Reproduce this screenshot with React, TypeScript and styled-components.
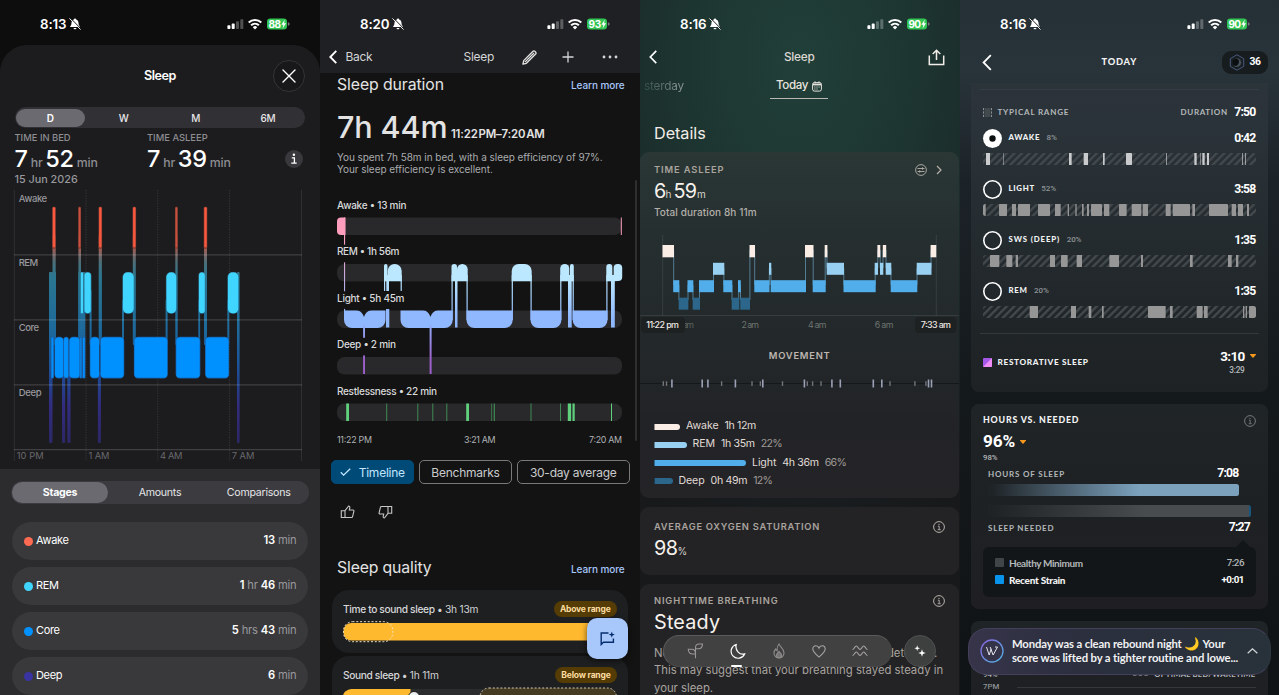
import { createGlobalStyle, css, styled } from "styled-components";

const GlobalStyle = createGlobalStyle`
  * {
    box-sizing: border-box;
  }
  body {
    margin: 0;
    background: #000;
    overflow: hidden;
    font-family: "Inter", "Liberation Sans", sans-serif;
    color: white;
  }
  svg {
    display: block;
    flex: none;
  }
`;

const Board = styled.div`
  display: grid;
  grid-template-columns: 320px 320px 320px 319px;
  width: 1279px;
  height: 695px;
`;

const Panel = styled.section<{ $bg: string }>`
  position: relative;
  display: flex;
  flex-direction: column;
  height: 695px;
  overflow: hidden;
  background: ${(p) => p.$bg};
`;

type TextProps = { $s: number; $w?: number; $c?: string; $ls?: number; $lh?: number };

const textStyle = css<TextProps>`
  font-size: ${(p) => p.$s}px;
  font-weight: ${(p) => p.$w ?? 400};
  color: ${(p) => p.$c ?? "#fff"};
  letter-spacing: ${(p) => p.$ls ?? 0}px;
  line-height: ${(p) => (p.$lh ? p.$lh + "px" : "1.2")};
  white-space: nowrap;
`;

const Text = styled.span<TextProps>`
  ${textStyle}
`;

/* ---------- status bar ---------- */

const StatusRow = styled.div`
  display: flex;
  align-items: center;
  flex: none;
  width: 320px;
  height: 45px;
  padding: 3px 30px 0 40px;
`;

const Clock = styled.span`
  font-size: 13.3px;
  font-weight: 600;
  letter-spacing: -0.1px;
  margin-right: 3px;
`;

const StatusIcons = styled.div`
  display: flex;
  align-items: center;
  gap: 4.6px;
  margin-left: auto;
`;

function StatusBar(prop: { time: string; level: string }) {
  return (
    <StatusRow>
      <Clock>{prop.time}</Clock>
      <svg width="12" height="12" viewBox="0 0 12 12">
        <path
          d="M6 .6c.7 0 1 .4 1.1.9 1.6.5 2.3 1.8 2.4 3.3.1 1.9.5 2.7 1.1 3.3.4.4.3 1-.4 1H1.8c-.7 0-.8-.6-.4-1 .6-.6 1-1.4 1.1-3.300.1-1.5.8-2.800 2.400-3.300C5 1 5.300.6 6 .6zM4.500 9.900h3c-.2.9-.8 1.300-1.500 1.300s-1.300-.4-1.500-1.300z"
          fill="#fff"
        />
        <path d="M1.6.2 12 10.8" stroke="#222" />
        <path d="M.7.7 11.3 11.3" stroke="#fff" strokeWidth=".9" strokeLinecap="round" />
      </svg>
      <StatusIcons>
        <svg width="17" height="12" viewBox="0 0 17 12">
          <rect x=".4" y="7.3" width="3" height="3.7" rx=".8" fill="#fff" />
          <rect x="4.7" y="5.6" width="3" height="5.4" rx=".8" fill="#fff" />
          <rect x="9" y="3.3" width="3" height="7.7" rx=".8" fill="#fff" opacity=".28" />
          <rect x="13.3" y="1.2" width="3" height="9.8" rx=".8" fill="#fff" opacity=".28" />
        </svg>
        <svg width="14" height="12" viewBox="0 0 14 12">
          <path d="M.7 4.5a9 9 0 0 1 12.6 0" stroke="#fff" strokeWidth="2" fill="none" />
          <path d="M3.1 7.2a5.7 5.7 0 0 1 7.8 0" stroke="#fff" strokeWidth="2" fill="none" />
          <path d="M7 11.4 4.8 9.2a3.1 3.1 0 0 1 4.4 0z" fill="#fff" />
        </svg>
        <svg width="23" height="12" viewBox="0 0 23 12">
          <rect y=".5" width="20" height="11" rx="3.3" fill="#32c553" />
          <path d="M20.8 4.2c1.3.3 1.9 1 1.9 1.8s-.6 1.5-1.9 1.8z" fill="#777" />
          <text x="1.6" y="9.6" fontSize="10" fontWeight="700" fill="#fff" textLength="12.5">
            {prop.level}
          </text>
          <path d="M17.7 1.8 14.3 6.700h2l-.7 3.700 3.500-5.100h-2z" fill="#fff" />
        </svg>
      </StatusIcons>
    </StatusRow>
  );
}

const BackIcon = styled.svg<{ $ml?: number }>`
  margin-left: ${(p) => p.$ml ?? 0}px;
`;

function Back(prop: { size: number; stroke: number; ml?: number }) {
  return (
    <BackIcon $ml={prop.ml} width={prop.size * 0.6} height={prop.size} viewBox="0 0 9 15">
      <path d="M7.8 1 1.4 7.5l6.4 6.5" stroke="#fff" strokeWidth={prop.stroke} fill="none" />
    </BackIcon>
  );
}

function Label(prop: { x: number; y: number; w: number; s?: number; c?: string; b?: number; children: string }) {
  return (
    <text x={prop.x} y={prop.y} textLength={prop.w} fontSize={prop.s ?? 9.5} fontWeight={prop.b ?? 400} fill={prop.c ?? "#98989d"}>
      {prop.children}
    </text>
  );
}

/* ---------- 1: stages sheet ---------- */

const Sheet = styled.div`
  display: flex;
  flex-direction: column;
  flex: none;
  height: 424px;
  border-radius: 27px 27px 0 0;
  background: #1c1c1e;
`;

const SheetHead = styled.header`
  display: grid;
  grid-template-columns: 1fr auto 1fr;
  align-items: center;
  height: 62px;
  padding: 0 15px;
`;

const CloseButton = styled.button`
  justify-self: end;
  display: grid;
  place-items: center;
  width: 32px;
  height: 32px;
  padding: 0;
  border: 1px solid #343437;
  border-radius: 50%;
  background: #18181a;
`;

const Segments = styled.div<{ $h: number; $bg: string; $m: string; $cols: number }>`
  display: grid;
  grid-template-columns: repeat(${(p) => p.$cols}, 1fr);
  flex: none;
  height: ${(p) => p.$h}px;
  margin: ${(p) => p.$m};
  padding: 1.5px 1px;
  border-radius: 12px;
  background: ${(p) => p.$bg};
`;

const Segment = styled.button<{ $on?: boolean; $s: number; $b?: number }>`
  border: none;
  padding: 0;
  margin-right: ${(p) => (p.$on ? 2.5 : 0)}px;
  border-radius: 11px;
  background: ${(p) => (p.$on ? "#6b6a70" : "transparent")};
  color: ${(p) => (p.$on ? "#fff" : "#e6e6e8")};
  font-family: inherit;
  font-size: ${(p) => p.$s}px;
  font-weight: ${(p) => p.$b ?? 400};
  letter-spacing: -0.25px;
`;

const Metrics = styled.div`
  display: grid;
  grid-template-columns: 132.5px 1fr auto;
  height: 44px;
  padding: 0 17px 0 14.5px;
`;

const Metric = styled.div`
  padding-top: 3px;
`;

const MetricValue = styled.div`
  display: flex;
  align-items: baseline;
  gap: 2.8px;
  height: 24px;
  margin-top: 1.5px;
`;

const InfoDot = styled.div`
  display: grid;
  place-items: center;
  width: 18px;
  height: 18px;
  margin-top: 22px;
  border-radius: 50%;
  background: #39393d;
`;

const SheetDate = styled.div`
  ${textStyle}
  padding-left: 14.5px;
`;

const StageList = styled.div`
  display: flex;
  flex-direction: column;
  gap: 7.5px;
  padding: 18px 12px 0 11.5px;
`;

const StageRow = styled.div`
  display: flex;
  align-items: center;
  flex: none;
  height: 37.5px;
  padding: 0.5px 11.5px 0 12px;
  border-radius: 19px;
  background: #39393b;
`;

const Dot = styled.i<{ $c: string }>`
  width: 9px;
  height: 9px;
  margin-right: 3.5px;
  border-radius: 50%;
  background: ${(p) => p.$c};
`;

const StageValue = styled.div`
  display: flex;
  gap: 3px;
  margin-left: auto;
`;

// [center, width]
const awake = [[54, 3], [79.6, 2.3], [100.3, 3], [134.3, 3], [176.4, 2.3], [205.5, 3]];
// [x, width]
const remBlocks = [[80.8, 2.3], [84.5, 6.3], [123, 10.7], [166.5, 9.7], [199, 5.8], [228, 10.3]];
const coreBlocks = [[51.5, 1.8], [55, 8.3], [64, 4.2], [69.6, 9.9], [80.4, 1], [83, 1.7], [90.4, 8.6], [100.8, 22.8], [134.5, 32.7], [176.3, 23.4], [205.7, 22.8]];
// [x, width, top, bottom]
const links = [
  [49, 3.5, 272, 443],
  [52, 4, 272, 345],
  [52.5, 3.2, 235, 280],
  [78.3, 7, 272, 378],
  [78.4, 2.6, 235, 345],
  [89.6, 2, 290, 345],
  [98.7, 3.2, 235, 345],
  [122, 2, 300, 345],
  [132.8, 3, 235, 345],
  [165.6, 2, 300, 345],
  [175.3, 2.4, 235, 345],
  [198.3, 1.8, 300, 345],
  [204, 3, 235, 345],
  [227.3, 1.9, 300, 345],
  [237, 2.6, 272, 443],
  [62, 3.2, 372, 443],
  [67.3, 3.2, 372, 443],
  [97.9, 3, 372, 443],
];

function StagesChart() {
  return (
    <svg width="320" height="281" viewBox="0 188 320 281">
      <defs>
        <linearGradient id="link" gradientUnits="userSpaceOnUse" x1="0" x2="0" y1="235" y2="443">
          <stop offset="0" stopColor="#d8543d" />
          <stop offset=".06" stopColor="#a85a50" />
          <stop offset=".13" stopColor="#4c6f78" />
          <stop offset=".2" stopColor="#2b7690" />
          <stop offset=".45" stopColor="#1d6a9c" />
          <stop offset=".6" stopColor="#1a579c" />
          <stop offset=".72" stopColor="#23418c" />
          <stop offset=".82" stopColor="#322c80" />
          <stop offset="1" stopColor="#2c2765" />
        </linearGradient>
      </defs>
      {[14.3, 301.5].map((x) => (
        <path key={x} d={`M${x} 190V461`} stroke="#303033" />
      ))}
      {[86, 157.8, 229.4].map((x) => (
        <path key={x} d={`M${x} 190V461`} stroke="#37373a" strokeDasharray="1.3 1.3" />
      ))}
      {links.map(([x, w, y1, y2], i) => (
        <rect key={i} x={x} y={y1} width={w} height={y2 - y1} rx=".8" fill="url(#link)" />
      ))}
      {awake.map(([x, w]) => (
        <g key={x}>
          <rect x={x - w / 2 - 0.3} y="206.8" width={w + 0.6} height="42" rx="1.2" fill="#7d3a30" />
          <rect x={x - w / 2 + 0.3} y="207.3" width={w - 0.6} height="40.3" rx="1" fill={w > 2.5 ? "#f9583f" : "#c8503c"} />
        </g>
      ))}
      {remBlocks.map(([x, w]) => (
        <rect key={x} x={x} y="272.5" width={w} height="40.7" rx={w > 5 ? Math.min(w / 2, 4.5) : 0.5} fill="#40d5ff" stroke="url(#link)" strokeWidth="1.2" paintOrder="stroke" />
      ))}
      {coreBlocks.map(([x, w]) => (
        <rect key={x} x={x} y="337.5" width={w} height="40.3" rx={w > 4 ? Math.min(w / 2, 3.5) : 0.4} fill="#0091ff" stroke="#1a5ea6" strokeWidth="1.3" paintOrder="stroke" />
      ))}
      {[254.8, 319.9, 384.8, 449.7].map((y) => (
        <path key={y} d={`M14 ${y}H302`} stroke="#fff" strokeOpacity=".16" strokeWidth="1.2" />
      ))}
      <Label x={18.7} y={201.5} w={28.5} b={500}>Awake</Label>
      <Label x={18.7} y={266.4} w={19.5} b={500}>REM</Label>
      <Label x={18.7} y={331.4} w={20.5} b={500}>Core</Label>
      <Label x={18.7} y={396.4} w={23} b={500}>Deep</Label>
      <Label x={16.7} y={459} w={27} s={9.3} c="#69696d">10 PM</Label>
      <Label x={88.5} y={459} w={21} s={9.3} c="#69696d">1 AM</Label>
      <Label x={160} y={459} w={22.5} s={9.3} c="#69696d">4 AM</Label>
      <Label x={231.8} y={459} w={22.5} s={9.3} c="#69696d">7 AM</Label>
    </svg>
  );
}

function BedMetric(prop: { label: string; hours: string; minutes: string }) {
  return (
    <Metric>
      <Text as="div" $s={9.4} $w={500} $c="#8d8d92" $lh={14}>
        {prop.label}
      </Text>
      <MetricValue>
        <Text $s={23.5} $w={500} $lh={24}>{prop.hours}</Text>
        <Text $s={12.3} $w={500} $c="#8d8d92" $ls={-0.2}>hr</Text>
        <Text $s={23.5} $w={500} $lh={24} $ls={-0.2}>{prop.minutes}</Text>
        <Text $s={12.3} $w={500} $c="#8d8d92" $ls={-0.1}>min</Text>
      </MetricValue>
    </Metric>
  );
}

const stageRows = [
  { name: "Awake", color: "#ff6a52", value: ["13", "min"] },
  { name: "REM", color: "#40d5ff", value: ["1", "hr", "46", "min"] },
  { name: "Core", color: "#0091ff", value: ["5", "hrs", "43", "min"] },
  { name: "Deep", color: "#3934a2", value: ["6", "min"] },
];

function StagesPanel() {
  return (
    <Panel $bg="linear-gradient(#0d0d0d 0 100px, #2c2c2e 300px)">
      <StatusBar time="8:13" level="88" />
      <Sheet>
        <SheetHead>
          <i />
          <Text $s={12.6} $w={600} $ls={-0.45}>Sleep</Text>
          <CloseButton>
            <svg width="14" height="14" viewBox="0 0 14 14">
              <path d="M1 1l12 12M13 1 1 13" stroke="#fff" strokeWidth="1.4" strokeLinecap="round" />
            </svg>
          </CloseButton>
        </SheetHead>
        <Segments $h={21} $bg="#313034" $m="0 15px 0 14.5px" $cols={4}>
          <Segment $on $s={10} $b={600}>D</Segment>
          <Segment $s={10} $b={500}>W</Segment>
          <Segment $s={10} $b={500}>M</Segment>
          <Segment $s={10} $b={500}>6M</Segment>
        </Segments>
        <Metrics>
          <BedMetric label="TIME IN BED" hours="7" minutes="52" />
          <BedMetric label="TIME ASLEEP" hours="7" minutes="39" />
          <InfoDot>
            <svg width="6" height="12" viewBox="0 0 6 12">
              <circle cx="2.9" cy="1.7" r="1.2" fill="#fff" />
              <path d="M.8 4.9h2.6v5M.3 10.2h5.4" stroke="#fff" strokeWidth="1.3" fill="none" />
            </svg>
          </InfoDot>
        </Metrics>
        <SheetDate $s={10.8} $w={500} $c="#98989d" $lh={16}>15 Jun 2026</SheetDate>
        <StagesChart />
      </Sheet>
      <Segments $h={23.5} $bg="#3c3b40" $m="11.5px 11px 0 11px" $cols={3}>
        <Segment $on $s={10.6} $b={700}>Stages</Segment>
        <Segment $s={10.6}>Amounts</Segment>
        <Segment $s={10.6}>Comparisons</Segment>
      </Segments>
      <StageList>
        {stageRows.map((row) => (
          <StageRow key={row.name}>
            <Dot $c={row.color} />
            <Text $s={11} $ls={-0.35}>{row.name}</Text>
            <StageValue>
              {row.value.map((v, i) => (
                <Text key={i} $s={11.2} $w={i % 2 ? 400 : 600} $c={i % 2 ? "#98989d" : "#fff"} $ls={-0.2}>
                  {v}
                </Text>
              ))}
            </StageValue>
          </StageRow>
        ))}
      </StageList>
    </Panel>
  );
}

/* ---------- 2: duration timeline ---------- */

const FitTop = styled.div`
  flex: none;
  height: 73px;
  background: #1f2023;
`;

const FitNav = styled.nav`
  display: grid;
  grid-template-columns: 16.5px 118px auto 1fr;
  align-items: center;
  height: 24px;
  padding: 0 22px 0 9px;
`;

const FitActions = styled.div`
  display: flex;
  align-items: center;
  justify-content: flex-end;
  gap: 28px;

  & > :first-child {
    margin-right: -3px;
  }
`;

const TitleRow = styled.div<{ $mt?: number }>`
  display: flex;
  align-items: center;
  justify-content: space-between;
  flex: none;
  height: 24px;
  margin-top: ${(p) => p.$mt ?? 0}px;
  padding: 0 15.5px 0 17px;
`;

const Hero = styled.div`
  display: flex;
  align-items: baseline;
  gap: 3.5px;
  flex: none;
  height: 36px;
  margin-top: 12px;
  padding-left: 17px;
`;

const FitNote = styled.p`
  ${textStyle}
  margin: 5.5px 0 19.7px;
  padding-left: 17px;
  white-space: pre-line;
`;

const Chips = styled.div`
  display: flex;
  gap: 5px;
  flex: none;
  margin: 15px 0 0 11px;
`;

const Chip = styled.button<{ $on?: boolean; $w: number }>`
  display: flex;
  align-items: center;
  justify-content: center;
  gap: 7.5px;
  width: ${(p) => p.$w}px;
  height: 24px;
  padding: 0;
  border: 1px solid ${(p) => (p.$on ? "#004a77" : "#77797b")};
  border-radius: 5px;
  background: ${(p) => (p.$on ? "#004a77" : "transparent")};
  color: ${(p) => (p.$on ? "#c2e7ff" : "#c9cbcd")};
  font-family: inherit;
  font-size: 12px;
  letter-spacing: -0.25px;
  white-space: nowrap;
`;

const Thumbs = styled.div`
  display: flex;
  gap: 23px;
  flex: none;
  height: 14px;
  margin: 21px 0 0 19.5px;
`;

const QualityCard = styled.div<{ $mt: number }>`
  flex: none;
  height: 63.5px;
  margin: ${(p) => p.$mt}px 12.5px 0 11.5px;
  border-radius: 17px;
  background: #1e1f21;
`;

const QualityHead = styled.div`
  display: flex;
  align-items: center;
  justify-content: space-between;
  height: 31px;
  padding: 7.5px 11px 0 11.5px;
`;

const Badge = styled.span`
  padding: 0 6px;
  border-radius: 8px;
  background: #553c04;
  color: #fbdca0;
  font-size: 8.5px;
  font-weight: 700;
  line-height: 16px;
  letter-spacing: -0.2px;
`;

const Fab = styled.button`
  position: absolute;
  left: 267px;
  top: 618px;
  display: grid;
  place-items: center;
  width: 41px;
  height: 41px;
  padding: 0;
  border: none;
  border-radius: 10px;
  background: #a8c7fa;
  box-shadow: 0 2px 6px rgba(0, 0, 0, 0.6);
`;

const Scrollbar = styled.div`
  position: absolute;
  right: 3px;
  top: 180px;
  width: 2px;
  height: 261px;
  border-radius: 1px;
  background: #2f2f30;
`;

// [x, width, strong]
const restless = [[346.2, 2.8, 1], [386.2, 1, 0], [417.3, 1, 0], [432.3, 1, 0], [446.3, 1, 0], [466.2, 2.8, 1], [491.3, 0.8, 0], [493.7, 1.2, 0], [530.5, 1, 0], [560, 1, 0], [567.8, 3.3, 1], [572.5, 2.2, 1], [611, 1, 1]];
const domes = [[384, 387.5], [387.7, 401.7], [451.5, 457], [457, 467.7], [511.7, 531.7], [560.2, 569.3], [570, 573.8], [606.3, 612.3]];
const blueLinks = [[384, 1.2, 291], [386.3, 2.7, 291], [400.6, 1.2, 291], [451.5, 1.2, 320], [455, 2.5, 327.5], [466.5, 1.2, 320], [511.7, 1.2, 320], [530.5, 1.2, 320], [560.2, 1.2, 320], [568, 3.7, 327.5], [572.6, 1.2, 320], [606.3, 1.2, 320], [611, 3.8, 327.5]];

function cup(x1: number, x2: number) {
  return `M${x1} 310.5V320a8 8 0 0 0 8 8H${x2 - 8}a8 8 0 0 0 8-8V310.5z`;
}

function TimelineChart() {
  return (
    <svg width="320" height="250" viewBox="320 195 320 250">
      <defs>
        <linearGradient id="rl" gradientUnits="userSpaceOnUse" x1="0" x2="0" y1="278" y2="318">
          <stop offset="0" stopColor="#bbe8ff" />
          <stop offset="1" stopColor="#90b8ff" />
        </linearGradient>
        <linearGradient id="pd" gradientUnits="userSpaceOnUse" x1="0" x2="0" y1="217" y2="315">
          <stop offset=".2" stopColor="#ff9dbc" />
          <stop offset="1" stopColor="#90b8ff" />
        </linearGradient>
        <linearGradient id="ld" gradientUnits="userSpaceOnUse" x1="0" x2="0" y1="320" y2="360">
          <stop offset="0" stopColor="#90b8ff" />
          <stop offset="1" stopColor="#9c5fcb" />
        </linearGradient>
      </defs>
      {[217.5, 264, 310.5, 357, 403.5].map((y) => (
        <rect key={y} x="337" y={y} width="285" height="17.5" rx="7.5" fill="#29292b" />
      ))}
      <path d="M341 217.5h4.5V235H341a4 4 0 0 1-4-4v-9.5a4 4 0 0 1 4-4z" fill="#ff9dbc" />
      <path d="M344 217.5h1.1V318H344z" fill="url(#pd)" />
      <rect x="620.8" y="217.5" width="1" height="17.5" fill="#ff9dbc" />
      {blueLinks.map(([x, w, y2]) => (
        <rect key={x} x={x} y="275" width={w} height={y2 - 275} fill="url(#rl)" />
      ))}
      {domes.map(([x1, x2]) => {
        const r = Math.min((x2 - x1) / 2, 7);
        return <path key={x1} d={`M${x1} 281.3V${264 + r}a${r} ${r} 0 0 1 ${r}-${r}H${x2 - r}a${r} ${r} 0 0 1 ${r} ${r}V281.3z`} fill="#bbe8ff" />;
      })}
      <path d="M613.7 281.3V268a4 4 0 0 1 4-4h.5a4 4 0 0 1 4 4v9a4 4 0 0 1-4 4z" fill="#bbe8ff" />
      {[[344, 385.5], [400.5, 452.7], [466.5, 512.7], [530.5, 561.4], [572.7, 607.5]].map(([a, b]) => (
        <path key={a} d={cup(a, b)} fill="#90b8ff" />
      ))}
      <path d="M356 310c4.5.6 6.5 3 8 7 1.5-4 3.5-6.4 8-7zM422.5 310c4.5.6 6.5 3 8 7 1.5-4 3.5-6.4 8-7z" fill="#1a1a1b" />
      <rect x="386" y="309" width="3.3" height="18.5" fill="#90b8ff" />
      <rect x="363.1" y="325" width="1.9" height="49" fill="url(#ld)" />
      <rect x="429.6" y="325" width="2" height="49" fill="url(#ld)" />
      {/* captions sit on top of the connectors */}
      {[[244.7, 74], [291.3, 72], [337.8, 60]].map(([y, w]) => (
        <rect key={y} x="337" y={y} width={w} height="17.6" fill="#131313" />
      ))}
      {restless.map(([x, w, on]) => (
        <rect key={x} x={x} y="403.5" width={w} height="17.5" fill={on ? "#5fd17c" : "#3f8a55"} />
      ))}
      <Label x={337} y={208.5} w={69.5} s={10} c="#d9dadc" b={500}>Awake • 13 min</Label>
      <Label x={337} y={255} w={62.5} s={10} c="#d9dadc" b={500}>REM • 1h 56m</Label>
      <Label x={337} y={301.7} w={67.5} s={10} c="#d9dadc" b={500}>Light • 5h 45m</Label>
      <Label x={337} y={348.3} w={59} s={10} c="#d9dadc" b={500}>Deep • 2 min</Label>
      <Label x={337} y={394.9} w={100} s={10} c="#d9dadc" b={500}>Restlessness • 22 min</Label>
      <Label x={337} y={442.7} w={35} s={8.9} c="#b0b2b5">11:22 PM</Label>
      <Label x={464} y={442.7} w={31.5} s={8.9} c="#b0b2b5">3:21 AM</Label>
      <Label x={589} y={442.7} w={33} s={8.9} c="#b0b2b5">7:20 AM</Label>
    </svg>
  );
}

function QualityTitle(prop: { name: string; value: string; badge: string }) {
  return (
    <QualityHead>
      <Text $s={10.2} $w={500} $c="#d6d8da" $ls={-0.36}>
        {prop.name} <Text $s={10.2} $c="#d0d2d4" $ls={-0.25}>• {prop.value}</Text>
      </Text>
      <Badge>{prop.badge}</Badge>
    </QualityHead>
  );
}

const thumb = "M5 5.7 8.6 1c.9.1 1.4.8 1.2 1.7L9.3 5H13c.7 0 1 .5.9 1.1l-1.3 5.5c-.1.6-.5.9-1.1.9H5zM5 5.7H1.3v6.8H5";

function DurationPanel() {
  return (
    <Panel $bg="#131313">
      <FitTop>
        <StatusBar time="8:20" level="93" />
        <FitNav>
          <Back size={14} stroke={2} />
          <Text $s={12} $c="#d4d5d7" $ls={-0.35}>Back</Text>
          <Text $s={12} $c="#d4d5d7" $ls={-0.3}>Sleep</Text>
          <FitActions>
            <svg width="15" height="15" viewBox="0 0 15 15" fill="none" stroke="#e3e3e3" strokeWidth="1.3" strokeLinejoin="round">
              <path d="M.9 14.1l.8-3.5L11 1.3c.6-.6 1.3-.6 1.8 0l.9.9c.5.6.5 1.2 0 1.8L4.4 13.3zM2.9 12.1 12 3" />
            </svg>
            <svg width="12" height="12" viewBox="0 0 12 12">
              <path d="M6 .5v11M.5 6h11" stroke="#d4d5d7" strokeWidth="1.3" />
            </svg>
            <svg width="16" height="4" viewBox="0 0 16 4" fill="#d4d5d7">
              <circle cx="2" cy="2" r="1.4" />
              <circle cx="8" cy="2" r="1.4" />
              <circle cx="14" cy="2" r="1.4" />
            </svg>
          </FitActions>
        </FitNav>
      </FitTop>
      <TitleRow>
        <Text $s={15.8} $c="#e3e3e3" $ls={-0.08}>Sleep duration</Text>
        <Text $s={10} $w={500} $c="#a8c7fa" $ls={-0.1}>Learn more</Text>
      </TitleRow>
      <Hero>
        <Text $s={30.5} $w={500} $c="#e3e3e3" $ls={-0.1} $lh={36}>7h 44m</Text>
        <Text $s={11.4} $w={600} $c="#e3e3e3" $ls={-0.15}>11:22&#8202;PM–7:20&#8202;AM</Text>
      </Hero>
      <FitNote $s={10} $c="#a9abae" $ls={-0.05} $lh={12.4}>
        {"You spent 7h 58m in bed, with a sleep efficiency of 97%.\nYour sleep efficiency is excellent."}
      </FitNote>
      <TimelineChart />
      <Chips>
        <Chip $on $w={83}>
          <svg width="11" height="8" viewBox="0 0 11 8">
            <path d="M.8 4.2l2.8 2.9L10.2.7" stroke="#c2e7ff" strokeWidth="1.3" fill="none" />
          </svg>
          Timeline
        </Chip>
        <Chip $w={93}>Benchmarks</Chip>
        <Chip $w={112.5}>30-day average</Chip>
      </Chips>
      <Thumbs>
        <svg width="15" height="14" viewBox="0 0 15 14" fill="none" stroke="#c4c7c5" strokeWidth="1.1">
          <path d={thumb} />
        </svg>
        <svg width="15" height="14" viewBox="0 0 15 14" fill="none" stroke="#c4c7c5" strokeWidth="1.1">
          <path d={thumb} transform="rotate(180 7.5 7)" />
        </svg>
      </Thumbs>
      <TitleRow $mt={37.5}>
        <Text $s={15.8} $c="#e3e3e3" $ls={-0.15}>Sleep quality</Text>
        <Text $s={10} $w={500} $c="#a8c7fa" $ls={-0.1}>Learn more</Text>
      </TitleRow>
      <QualityCard $mt={9}>
        <QualityTitle name="Time to sound sleep" value="3h 13m" badge="Above range" />
        <svg width="296" height="23" viewBox="331.5 621 296 23">
          <rect x="343" y="623" width="273" height="17.5" rx="8" fill="#ffb92e" />
          <rect x="343" y="621.7" width="49.3" height="20" rx="9" fill="none" stroke="#f0e3c4" strokeDasharray="2 1.8" />
        </svg>
      </QualityCard>
      <QualityCard $mt={2.5}>
        <QualityTitle name="Sound sleep" value="1h 11m" badge="Below range" />
        <svg width="296" height="23" viewBox="331.5 687 296 23">
          <rect x="343" y="689" width="273" height="17.5" rx="8" fill="#2b2c2e" />
          <path d="M410 689v17.5H351a8 8 0 0 1 0-17.5z" fill="#ffb92e" />
          <rect x="479.5" y="688" width="136.5" height="20" rx="9" fill="#453b22" stroke="#cfc6ae" strokeDasharray="2 1.8" />
          <circle cx="413.5" cy="697" r="5.5" fill="#f1f1f1" stroke="#1e1f21" />
        </svg>
      </QualityCard>
      <Scrollbar />
      <Fab>
        <svg width="15" height="15" viewBox="0 0 15 15">
          <path d="M8.5 2H1.2v11.5l2.2-2.2h10V7.5" stroke="#062e6f" strokeWidth="1.4" fill="none" />
          <path d="M11.8.4l.8 2.4 2.3.8-2.3.8-.8 2.4-.8-2.4-2.3-.8 2.3-.8z" fill="#062e6f" />
        </svg>
      </Fab>
    </Panel>
  );
}

/* ---------- 3: details ---------- */

const RingNav = styled.nav`
  display: grid;
  grid-template-columns: 1fr auto 1fr;
  align-items: center;
  flex: none;
  height: 24px;
  padding: 0 15.5px 0 14px;
`;

const ShareSlot = styled.div`
  justify-self: end;
`;

const Tabs = styled.div`
  display: grid;
  grid-template-columns: 130px 58px;
  flex: none;
  height: 30px;
`;

const OtherDay = styled.span`
  padding: 8px 0 0 4px;
  font-size: 11.8px;
  line-height: 18px;
  letter-spacing: -0.2px;
  color: transparent;
  background: linear-gradient(90deg, #2b4a45 2px, #8a9593 42px);
  background-clip: text;
`;

const CurrentDay = styled.span`
  display: flex;
  align-items: center;
  justify-content: center;
  gap: 4px;
  padding-top: 5px;
  border-bottom: 1px solid #b9b8b4;
`;

const DetailsTitle = styled.h2`
  flex: none;
  margin: 16px 0 1px;
  padding-left: 14px;
  font-size: 16.2px;
  font-weight: 400;
  line-height: 36px;
  letter-spacing: -0.05px;
  color: #f2ede8;
`;

const RingCard = styled.div<{ $h: number; $pt: number; $bg: string }>`
  display: flex;
  flex-direction: column;
  flex: none;
  width: 319px;
  height: ${(p) => p.$h}px;
  margin-bottom: 9px;
  padding-top: ${(p) => p.$pt}px;
  border-radius: 9px;
  background: ${(p) => p.$bg};
`;

const CardHead = styled.div`
  display: flex;
  align-items: center;
  justify-content: space-between;
  height: 16px;
  padding: 0 14px;
`;

const HeadIcons = styled.div`
  display: flex;
  align-items: center;
  gap: 9px;
  padding-right: 3px;
`;

const RingValue = styled.div`
  display: flex;
  align-items: baseline;
  height: 26px;
  padding-left: 14px;
`;

const TotalDuration = styled.div`
  ${textStyle}
  padding-left: 14px;
  margin-bottom: 10.5px;
`;

const Legend = styled.div`
  margin-top: 22.5px;
  padding-left: 14px;
`;

const LegendRow = styled.div`
  display: flex;
  align-items: center;
  gap: 6px;
  height: 18.2px;
`;

const LegendBar = styled.i<{ $w: number; $c: string }>`
  width: ${(p) => p.$w}px;
  height: 6px;
  border-left: 1.5px solid #00000066;
  border-radius: 0 3px 3px 0;
  background: ${(p) => p.$c};
`;

const Paragraph = styled.p`
  ${textStyle}
  margin: 9.5px 0 0;
  padding-left: 14px;
`;

const GlassNav = styled.div`
  position: absolute;
  left: 23px;
  top: 635px;
  display: flex;
  align-items: center;
  justify-content: space-between;
  width: 229px;
  height: 32px;
  padding: 0 23px;
  border: 1px solid #5a5a5a;
  border-right-color: #454545;
  border-bottom-color: #4a4a4a;
  border-radius: 16px;
  background: #414141;
`;

const GlassButton = styled.button`
  position: absolute;
  left: 264px;
  top: 635px;
  display: grid;
  place-items: center;
  width: 32px;
  height: 32px;
  padding: 0;
  border: 1px solid #4e4f4f;
  border-radius: 50%;
  background: #3e4040;
`;

const ActiveMark = styled.i`
  position: absolute;
  left: 91px;
  top: 665px;
  width: 11px;
  height: 2px;
  border-radius: 1px;
  background: #fff;
`;

function InfoIcon(prop: { color: string }) {
  return (
    <svg width="12" height="12" viewBox="0 0 12 12" fill="none" stroke={prop.color}>
      <circle cx="6" cy="6" r="5.4" />
      <path d="M4.9 5.2H6.2v3.3M4.7 8.7h3" strokeWidth=".9" />
      <circle cx="6" cy="3.4" r=".6" fill={prop.color} stroke="none" />
    </svg>
  );
}

const hypno = [
  { y: 245, h: 12.3, c: "#f9ede6", spans: [[662.5, 674], [749.5, 755], [805, 813.5], [824.7, 827.4], [877.4, 880.3], [882.8, 886.2], [930.6, 936.3]] },
  { y: 262.8, h: 12, c: "#98d0f2", spans: [[713, 724.3], [769, 771.3], [826.7, 844], [874.7, 878], [880, 883.3], [885.7, 891.3], [916.7, 931.5]] },
  { y: 280.2, h: 12, c: "#51aeea", spans: [[673.2, 679.3], [687.5, 693.3], [699, 714], [723.3, 732.3], [738, 740.8], [754.3, 769.5], [770.7, 806], [812.7, 825.7], [843.5, 875.7], [890.7, 917.3]] },
  { y: 297.7, h: 12, c: "#2c668b", spans: [[678.7, 688.3], [692.7, 700], [731.7, 739.3], [740.3, 750]] },
];
// [x, from, to]
const drops = [[673.7, 250, 285], [678.9, 285, 300], [688, 285, 300], [693, 285, 300], [699.5, 285, 300], [713.5, 268, 285], [723.9, 268, 285], [732, 285, 300], [738.7, 285, 300], [740.5, 285, 300], [749.9, 250, 300], [754.7, 250, 285], [769.3, 268, 285], [771, 268, 285], [805.5, 250, 285], [813.2, 250, 285], [825.2, 250, 285], [827, 250, 268], [843.8, 268, 285], [875.2, 268, 285], [877.8, 250, 268], [880.2, 250, 268], [883, 250, 268], [886, 250, 268], [891, 268, 285], [917, 268, 285], [931, 250, 268]];
const tallTicks = [671.9, 702.2, 707.9, 735.4, 762.8, 804.4, 831.9, 840.3, 873.3, 881.8, 928.5, 931.5];
const shortTicks = [663.3, 666.5, 721.6, 752, 760.4, 782.5, 807.3, 812.6, 821, 890, 914.9, 925.9];

function HypnogramChart() {
  return (
    <svg width="319" height="165" viewBox="640 230 319 165">
      <path d="M662.7 235V315.5M936.3 235V315.5M640 315.5H959" stroke="#fff" strokeOpacity=".09" />
      {drops.map(([x, y1, y2]) => (
        <path key={x} d={`M${x} ${y1}V${y2}`} stroke="#6fa9cc" strokeWidth=".8" opacity=".8" />
      ))}
      {hypno.map((row) =>
        row.spans.map(([a, b]) => <rect key={a} x={a} y={row.y} width={b - a} height={row.h} fill={row.c} />)
      )}
      <Label x={683} y={328.2} w={11} s={8.8} c="#5b6260">am</Label>
      <Label x={741.5} y={328.2} w={17.5} s={8.8} c="#6d7371">2 am</Label>
      <Label x={808} y={328.2} w={18.5} s={8.8} c="#6d7371">4 am</Label>
      <Label x={874.7} y={328.2} w={18.7} s={8.8} c="#6d7371">6 am</Label>
      <rect x="641" y="317" width="44" height="16" rx="4" fill="#1e2122" />
      <rect x="915" y="317" width="41.5" height="16" rx="4" fill="#1e2122" />
      <Label x={646.3} y={328.2} w={32.7} s={8.9} c="#efe9e4" b={500}>11:22 pm</Label>
      <Label x={920.8} y={328.2} w={30.2} s={8.9} c="#efe9e4" b={500}>7:33 am</Label>
      <Label x={768.8} y={359.2} w={61} s={9.4} c="#bfb6b0" b={600}>MOVEMENT</Label>
      <path d="M640 383.5H959" stroke="#14181a" />
      {tallTicks.map((x) => (
        <rect key={x} x={x - 0.8} y="379.5" width="1.6" height="8" fill="#9aa0b5" />
      ))}
      {shortTicks.map((x) => (
        <rect key={x} x={x - 0.7} y="381.3" width="1.4" height="4.6" fill="#74747c" />
      ))}
    </svg>
  );
}

const legend = [
  { name: "Awake", time: "1h 12m", pct: "", w: 26, c: "#f9ede6" },
  { name: "REM", time: "1h 35m", pct: "22%", w: 32.5, c: "#98d0f2" },
  { name: "Light", time: "4h 36m", pct: "66%", w: 92, c: "#51aeea" },
  { name: "Deep", time: "0h 49m", pct: "12%", w: 18.5, c: "#2c668b" },
];

function DetailsPanel() {
  return (
    <Panel $bg="radial-gradient(ellipse 330px 480px at 160px 60px, #213f39 0%, #1d3531 35%, #1a2626 70%, #18191b 100%)">
      <StatusBar time="8:16" level="90" />
      <RingNav>
        <Back size={14} stroke={1.8} ml={-5} />
        <Text $s={11.8} $w={500} $c="#ddd8d2" $ls={-0.25}>Sleep</Text>
        <ShareSlot>
          <svg width="17" height="17" viewBox="0 0 17 17" fill="none" stroke="#f2ede8" strokeWidth="1.5">
            <path d="M1.3 6.5v8.9h14.4V6.5M8.5 11V1.5M4.7 5l3.8-3.7L12.3 5" />
          </svg>
        </ShareSlot>
      </RingNav>
      <Tabs>
        <OtherDay>sterday</OtherDay>
        <CurrentDay>
          <Text $s={11.6} $w={500} $c="#e8e3de" $ls={-0.35}>Today</Text>
          <svg width="10" height="11" viewBox="0 0 10 11" fill="none" stroke="#e8e3de">
            <rect x=".6" y="1.6" width="8.8" height="8.5" rx="1.8" />
            <path d="M.8 3.5h8.4" strokeWidth="1.8" />
            <path d="M3 .3v2M7 .3v2" />
            <path d="M2.3 6h1.2M4.4 6h1.2M6.5 6h1.2M2.3 8h1.2M4.4 8h1.2" strokeWidth=".9" />
          </svg>
        </CurrentDay>
      </Tabs>
      <DetailsTitle>Details</DetailsTitle>
      <RingCard $h={346} $pt={9.5} $bg="linear-gradient(#293735 0, #262f30 80px, #23292a 180px, #222327 270px, #242427 346px)">
        <CardHead>
          <Text $s={9.3} $w={600} $c="#aaa49e" $ls={0.9}>TIME ASLEEP</Text>
          <HeadIcons>
            <svg width="12" height="12" viewBox="0 0 12 12" fill="none" stroke="#b7b0aa" strokeWidth=".9">
              <circle cx="6" cy="6" r="5.4" />
              <path d="M2.5 4.5h7M2.5 7.5h7M7.5 3.3v2.4M4.7 6.3v2.4" />
            </svg>
            <svg width="6" height="10" viewBox="0 0 6 10">
              <path d="M1 1l4 4-4 4" stroke="#b7b0aa" strokeWidth="1.2" fill="none" />
            </svg>
          </HeadIcons>
        </CardHead>
        <RingValue>
          <Text $s={19.8} $c="#f7f2ed" $lh={26} $ls={-0.7}>6</Text>
          <Text $s={10} $c="#d8d3ce">h</Text>
          <Text $s={19.8} $c="#f7f2ed" $lh={26} $ls={-0.8}>&#8202;&#8202;59</Text>
          <Text $s={10} $c="#d8d3ce">&#8202;m</Text>
        </RingValue>
        <TotalDuration $s={10} $w={500} $c="#b3afaa" $ls={0.1} $lh={16}>Total duration 8h 11m</TotalDuration>
        <HypnogramChart />
        <Legend>
          {legend.map((l) => (
            <LegendRow key={l.name}>
              <LegendBar $w={l.w} $c={l.c} />
              <Text $s={10.6} $c="#e0dbd6" $ls={-0.1}>{l.name}</Text>
              <Text $s={10.6} $c="#e0dbd6" $ls={-0.35}>{l.time}</Text>
              <Text $s={10.6} $c="#a09c98" $ls={-0.7}>{l.pct}</Text>
            </LegendRow>
          ))}
        </Legend>
      </RingCard>
      <RingCard $h={68} $pt={12} $bg="#232326">
        <CardHead>
          <Text $s={9.3} $w={600} $c="#aaa49e" $ls={0.75}>AVERAGE OXYGEN SATURATION</Text>
          <InfoIcon color="#b7b0aa" />
        </CardHead>
        <RingValue>
          <Text $s={19.8} $c="#f7f2ed" $lh={26} $ls={-0.5}>98</Text>
          <Text $s={9.8} $c="#d8d3ce">%</Text>
        </RingValue>
      </RingCard>
      <RingCard $h={130} $pt={9} $bg="#232326">
        <CardHead>
          <Text $s={9.3} $w={600} $c="#aaa49e" $ls={0.85}>NIGHTTIME BREATHING</Text>
          <InfoIcon color="#b7b0aa" />
        </CardHead>
        <RingValue>
          <Text $s={19.8} $c="#f7f2ed" $ls={0.2} $lh={26}>Steady</Text>
        </RingValue>
        <Paragraph $s={11.3} $c="#a9a49f" $lh={17.6}>
          No significant breathing disturbances were detected.
          <br />
          This may suggest that your breathing stayed steady in
          <br />
          your sleep.
        </Paragraph>
      </RingCard>
      <GlassNav>
        <svg width="17" height="16" viewBox="0 0 17 16" fill="none" stroke="#9a9896" strokeWidth="1.1">
          <path d="M8.5 15.2V4.8C8.5 2.3 9.8 1 12 1h3.5c0 3.3-1.3 4.7-4 4.7h-3M8.5 11H5.8C3 11 1.3 9.3 1.3 6.3h3.3c2.6 0 3.9 1.5 3.9 4.7z" />
        </svg>
        <svg width="16" height="16" viewBox="0 0 16 16" fill="none" stroke="#fff" strokeWidth="1.2">
          <path d="M6.2 1.5a7 7 0 1 0 8.4 9.4C10 12.3 4.7 8 6.2 1.5z" />
        </svg>
        <svg width="14" height="16" viewBox="0 0 14 16" fill="none" stroke="#8e8c8a" strokeWidth="1.1">
          <path d="M7 1c.5 2.5 5 4.5 5 9a5 5 0 0 1-10 0c0-1.7.7-3 1.7-4 .3 1 .8 1.5 1.5 1.8C5 5.5 5.5 2.7 7 1z" />
          <path d="M7 8.5c1 1 2.5 2 2.5 3.7a2.5 2.5 0 0 1-5 0C4.5 10.5 6 9.5 7 8.5z" fill="#777573" />
        </svg>
        <svg width="14" height="13" viewBox="0 0 14 13" fill="none" stroke="#a8a6a4" strokeWidth="1.1">
          <path d="M7 12C4 9.5.8 7 .8 4.1.8 2 2.3.8 3.9.8 5.3.8 6.5 1.6 7 3c.5-1.4 1.7-2.2 3.1-2.2 1.6 0 3.1 1.2 3.1 3.3C13.2 7 10 9.5 7 12z" />
        </svg>
        <svg width="16" height="12" viewBox="0 0 16 12" fill="none" stroke="#a8a6a4" strokeWidth="1.1">
          <path d="M.5 4.5C2 4.5 2.8 1 4.3 1S6.5 4.5 8 4.5 10.2 1 11.7 1s2.3 3.5 3.8 3.5M.5 10.5c1.5 0 2.3-3.5 3.8-3.5s2.2 3.5 3.7 3.5S10.2 7 11.7 7s2.3 3.5 3.8 3.5" />
        </svg>
      </GlassNav>
      <ActiveMark />
      <GlassButton>
        <svg width="12" height="12" viewBox="0 0 12 12" fill="#fff">
          <path d="M3.2.3l.7 2.2 2.2.7-2.2.7-.7 2.2-.7-2.2L.3 3.2l2.2-.7zM8 4.3l.9 2.8 2.8.9-2.8.9L8 11.7l-.9-2.8L4.3 8l2.8-.9z" />
        </svg>
      </GlassButton>
    </Panel>
  );
}

/* ---------- 4: sleep today ---------- */

const BandNav = styled.nav`
  display: grid;
  grid-template-columns: 1fr auto 1fr;
  align-items: center;
  flex: none;
  height: 34px;
  padding: 0 11.5px 0 11px;
`;

const StreakBadge = styled.div`
  justify-self: end;
  display: flex;
  align-items: center;
  gap: 4.5px;
  height: 23px;
  padding: 0 7px;
  border-radius: 9px;
  background: #171c1f;
`;

const BandCard = styled.div<{ $h: number; $mt: number; $fade?: boolean }>`
  display: flex;
  flex-direction: column;
  flex: none;
  width: 296.5px;
  height: ${(p) => p.$h}px;
  margin: ${(p) => p.$mt}px 0 0 11px;
  padding: 0 12px;
  border-radius: ${(p) => (p.$fade ? "0 0 8px 8px" : "8px")};
  background: ${(p) =>
    p.$fade
      ? "linear-gradient(#2a3439 0, #2c333a 15px, #2a3339 40px, #242b2f 160px, #202528 240px, #1e2225 308px)"
      : "linear-gradient(#1f2427, #1e2124 50%, #1f1f23)"};
`;

const Spread = styled.div<{ $h: number; $mt?: number; $px?: number; $gap?: number }>`
  display: flex;
  align-items: center;
  flex: none;
  gap: ${(p) => p.$gap ?? 5.5}px;
  height: ${(p) => p.$h}px;
  margin-top: ${(p) => p.$mt ?? 0}px;
  padding: 0 ${(p) => p.$px ?? 0}px;

  & > :last-child {
    margin-left: auto;
  }
`;

const Line = styled.hr<{ $mt: number; $c: string }>`
  flex: none;
  width: 279px;
  height: 1px;
  margin: ${(p) => p.$mt}px 0 0 -3px;
  border: none;
  background: ${(p) => p.$c};
`;

const DurationSlot = styled.div`
  display: flex;
  align-items: center;
  gap: 6.5px;
`;

const StageBlocks = styled.div`
  margin-top: 5px;
`;

const StageBlock = styled.div`
  display: flex;
  flex-direction: column;
  gap: 2px;
  height: 51px;
`;

const Radio = styled.i<{ $on?: boolean }>`
  width: 19px;
  height: 19px;
  border-radius: 50%;
  background: ${(p) => (p.$on ? "#0c0f10" : "transparent")};
  box-shadow: inset 0 0 0 ${(p) => (p.$on ? 6.3 : 1.6)}px #fff;
`;

const Caps = styled.span<{ $s: number; $w?: number; $c?: string; $ls: number }>`
  font-family: "Lato", sans-serif;
  font-size: ${(p) => p.$s}px;
  font-weight: ${(p) => p.$w ?? 900};
  letter-spacing: ${(p) => p.$ls}px;
  color: ${(p) => p.$c ?? "#f1f2f3"};
  line-height: 1;
  white-space: nowrap;
`;

const Digits = styled.span<{ $s: number; $c?: string; $w?: number; $ls?: number }>`
  font-family: "Roboto", sans-serif;
  font-size: ${(p) => p.$s}px;
  font-weight: ${(p) => p.$w ?? 700};
  letter-spacing: ${(p) => p.$ls ?? -0.5}px;
  color: ${(p) => p.$c ?? "#fff"};
  line-height: 1;
`;

const Compare = styled.div`
  display: grid;
  grid-template-columns: auto 11px;
  justify-items: end;
  align-items: center;
  row-gap: 3px;
`;

const PercentRow = styled.div`
  display: flex;
  align-items: center;
  gap: 5px;
  flex: none;
  height: 24px;
  margin-bottom: 1px;
  padding-top: 1px;
`;

const MeterTime = styled.div<{ $mr: number }>`
  display: flex;
  padding: 0 ${(p) => p.$mr}px 1px 0;
`;

const Meter = styled.div<{ $w: number; $mt: number; $bg: string }>`
  flex: none;
  width: ${(p) => p.$w}px;
  height: 12px;
  margin: ${(p) => p.$mt}px 0 0 5px;
  border-radius: 0 2.5px 2.5px 0;
  background: ${(p) => p.$bg};
`;

const Breakdown = styled.div`
  position: relative;
  flex: none;
  height: 49.5px;
  margin-top: 11px;
  padding-top: 7px;
  border-radius: 6px;
  background: #131618;

  &::before {
    content: "";
    position: absolute;
    right: 6px;
    top: -7px;
    border: 7px solid transparent;
    border-top: none;
    border-bottom-color: #131618;
  }
`;

const Swatch = styled.i<{ $bg: string }>`
  width: 9px;
  height: 9px;
  border-radius: 1px;
  background: ${(p) => p.$bg};
`;

const Toast = styled.div`
  position: absolute;
  left: 8px;
  top: 628px;
  display: grid;
  grid-template-columns: 32.5px 1fr 11px;
  align-items: center;
  width: 302.5px;
  height: 46.5px;
  padding: 0 12px 0 10.5px;
  border: 1px solid #44405c;
  border-right-color: #2c3740;
  border-radius: 19px;
  background: linear-gradient(90deg, #37344a, #2b2f3e 35%, #28323a);
`;

const ToastText = styled.p`
  margin: 0;
  font: 700 11.3px/14px "Lato", sans-serif;
  letter-spacing: -0.14px;
  color: #f1f2f3;
  white-space: pre;
`;

const Moon = styled.span`
  font-size: 12.5px;
  letter-spacing: 0;
  line-height: 1;
`;

const ChartAxis = styled.div`
  display: flex;
  align-items: center;
  gap: 18px;
  height: 10px;
`;

const AxisLine = styled.i`
  flex: 1;
  height: 1px;
  background: #34383b;
`;

function Triangle() {
  return (
    <svg width="6" height="4" viewBox="0 0 6 4">
      <path d="M.4 0h5.2c.4 0 .5.4.3.7L3.3 3.7a.4.4 0 0 1-.6 0L.1.7C-.1.4 0 0 .4 0z" fill="#f7981d" />
    </svg>
  );
}

// span edges are in thirds of a pixel, the track starts at 69
const bandStages = [
  { name: "AWAKE", ls: 0.65, pct: "8%", time: "0:42", on: true, c: "#c9cbcc", spans: [[78, 90], [129, 130.5], [327, 335], [371, 384], [429, 434], [498, 516], [618, 620], [703, 710], [720, 721.5], [727, 734], [741, 747], [847, 849], [855, 857]] },
  { name: "LIGHT", ls: 0.7, pct: "52%", time: "3:58", c: "#969696", spans: [[69, 77], [117, 141], [156, 168], [174, 210], [234, 270], [285, 302], [323, 327], [346, 350], [366, 371], [381, 387], [393, 426], [432, 448], [477, 500], [515, 544], [548, 564], [617, 632], [638, 690], [697, 705], [747, 804], [815, 828], [834, 849], [861, 867]] },
  { name: "SWS (DEEP)", ls: 0.9, pct: "20%", time: "1:35", c: "#969696", spans: [[90, 118], [139, 157], [167, 174], [270, 285], [303, 323], [350, 366], [448, 477], [543, 549], [690, 698], [804, 815], [828, 835]] },
  { name: "REM", ls: 0.7, pct: "20%", time: "1:35", c: "#969696", spans: [[209, 234], [333, 348], [386, 394], [426, 431], [564, 617], [630, 638], [710, 728], [732, 743], [849, 853], [857, 861], [867, 888]] },
];

function StageTrack(prop: { c: string; spans: number[][]; id: string }) {
  return (
    <svg width="273" height="12" viewBox="0 0 273 12">
      <defs>
        <pattern id={prop.id} width="5.3" height="5.3" patternUnits="userSpaceOnUse" patternTransform="rotate(45)">
          <rect width="2.3" height="5.3" fill="#43494d" />
        </pattern>
        <clipPath id={prop.id + "c"}>
          <rect width="273" height="12" rx="2.5" />
        </clipPath>
      </defs>
      <g clipPath={`url(#${prop.id}c)`}>
        <rect width="273" height="12" fill={`url(#${prop.id})`} />
        {prop.spans.map(([a, b]) => (
          <rect key={a} x={(a - 69) / 3} width={(b - a) / 3} height="12" rx={b - a > 17 ? 0.8 : 0} fill={prop.c} />
        ))}
      </g>
    </svg>
  );
}

function TodayPanel() {
  return (
    <Panel $bg="linear-gradient(#253036 0, #28333a 70px, #1c2328 180px, #14191c 380px, #101315 695px)">
      <StatusBar time="8:16" level="90" />
      <BandNav>
        <Back size={17} stroke={1.6} ml={11} />
        <Caps $s={9.3} $ls={0.75}>TODAY</Caps>
        <StreakBadge>
          <svg width="16" height="17" viewBox="0 0 16 17" fill="none">
            <path d="M8 .8l6.7 3.8v7.8L8 16.2 1.3 12.4V4.6z" stroke="#4a5a80" />
            <circle cx="8" cy="8.5" r="4.6" fill="#2d3439" />
            <circle cx="7" cy="8.3" r="3.6" fill="#0c0f11" />
            <path d="M7.5 4.3a4.3 4.3 0 1 1-3 7.2 3.7 3.7 0 0 0 3-7.2z" fill="#49535c" />
          </svg>
          <Digits $s={10.4} $ls={-0.5}>36</Digits>
        </StreakBadge>
      </BandNav>
      <BandCard $h={308.5} $mt={4} $fade>
        <Line $mt={5.5} $c="#353d43" />
        <Spread $h={16} $mt={14.5}>
          <svg width="9" height="9" viewBox="0 0 9 9">
            <rect x="1.5" width="6" height="9" fill="#434a4e" />
            <path d="M.5 0v9M8.5 0v9" stroke="#8a9094" strokeDasharray="2.2 1.2" />
          </svg>
          <Caps $s={8} $w={700} $c="#b4b8ba" $ls={0.8}>TYPICAL RANGE</Caps>
          <DurationSlot>
            <Caps $s={8} $w={700} $c="#b4b8ba" $ls={0.65}>DURATION</Caps>
            <Digits $s={12.2} $ls={-0.8}>7:50</Digits>
          </DurationSlot>
        </Spread>
        <StageBlocks>
          {bandStages.map((s, i) => (
            <StageBlock key={s.name}>
              <Spread $h={26} $gap={6.5}>
                <Radio $on={s.on} />
                <Caps $s={7.8} $ls={s.ls}>{s.name}</Caps>
                <Digits $s={8} $w={500} $c="#8d9396" $ls={-0.1}>{s.pct}</Digits>
                <Digits $s={12.2} $ls={-0.8}>{s.time}</Digits>
              </Spread>
              <StageTrack c={s.c} spans={s.spans} id={`hatch${i}`} />
            </StageBlock>
          ))}
        </StageBlocks>
        <Line $mt={4} $c="#34393d" />
        <Spread $h={24} $mt={16}>
          <svg width="9" height="9" viewBox="0 0 9 9">
            <rect width="9" height="9" rx="1" fill="#a558e8" />
            <path d="M9 0v8a1 1 0 0 1-1 1H0z" fill="#f08cf5" />
          </svg>
          <Caps $s={8.2} $ls={0.68}>RESTORATIVE SLEEP</Caps>
          <Compare>
            <Digits $s={13.5} $ls={-0.7}>3:10</Digits>
            <Triangle />
            <Digits $s={8.3} $w={500} $c="#b4b8ba" $ls={-0.3}>3:29</Digits>
          </Compare>
        </Spread>
      </BandCard>
      <BandCard $h={205.5} $mt={12}>
        <Spread $h={17} $mt={8.5}>
          <Caps $s={8.8} $ls={0.82}>HOURS VS. NEEDED</Caps>
          <InfoIcon color="#75797b" />
        </Spread>
        <PercentRow>
          <Digits $s={17.2} $ls={-0.1}>96%</Digits>
          <Triangle />
        </PercentRow>
        <Digits $s={7.8} $w={500} $c="#b4b8ba" $ls={0}>98%</Digits>
        <Spread $h={16} $mt={4} $px={5}>
          <Caps $s={8} $w={700} $c="#b4b8ba" $ls={0.82}>HOURS OF SLEEP</Caps>
          <MeterTime $mr={12}>
            <Digits $s={12.2} $ls={-0.8}>7:08</Digits>
          </MeterTime>
        </Spread>
        <Meter $w={251} $mt={2} $bg="linear-gradient(90deg, #1f2427 2%, #7ba1bd 60%)" />
        <Meter $w={263} $mt={9.5} $bg="linear-gradient(90deg, #1f2326 2%, #484c4e 60% 99.1%, #17567f 99.2%)" />
        <Spread $h={17} $mt={2} $px={5}>
          <Caps $s={8} $w={700} $c="#b4b8ba" $ls={0.82}>SLEEP NEEDED</Caps>
          <MeterTime $mr={0.5}>
            <Digits $s={12.2} $ls={-0.8}>7:27</Digits>
          </MeterTime>
        </Spread>
        <Breakdown>
          <Spread $h={17} $px={11.5}>
            <Swatch $bg="#404548" />
            <Caps $s={10} $w={700} $c="#b4b8ba" $ls={-0.4}>Healthy Minimum</Caps>
            <Digits $s={9.8} $w={500} $c="#b4b8ba">7:26</Digits>
          </Spread>
          <Spread $h={16.5} $px={11.5}>
            <Swatch $bg="#0894ec" />
            <Caps $s={10} $ls={-0.25}>Recent Strain</Caps>
            <Digits $s={9.8}>+0:01</Digits>
          </Spread>
        </Breakdown>
      </BandCard>
      <BandCard $h={90} $mt={12}>
        <Spread $h={14} $mt={47}>
          <Digits $s={7.8} $w={500} $c="#b4b8ba" $ls={0}>94%</Digits>
          <DurationSlot>
            <svg width="15" height="2" viewBox="0 0 15 2">
              <path d="M0 1h15" stroke="#b4b8ba" strokeDasharray="3.5 2.2" />
            </svg>
            <Caps $s={7.7} $w={700} $c="#b4b8ba" $ls={0.25}>OPTIMAL BED/WAKETIME</Caps>
          </DurationSlot>
        </Spread>
        <ChartAxis>
          <Digits $s={7.8} $w={500} $c="#8d9396" $ls={0}>7PM</Digits>
          <AxisLine />
        </ChartAxis>
      </BandCard>
      <Toast>
        <svg width="24" height="24" viewBox="0 0 24 24" fill="none">
          <defs>
            <linearGradient id="ring" x1="0" y1="0" x2="1" y2="1">
              <stop offset="0" stopColor="#8a63e0" />
              <stop offset="1" stopColor="#4fb4e6" />
            </linearGradient>
          </defs>
          <circle cx="12" cy="12" r="11" stroke="url(#ring)" strokeWidth="1.3" />
          <path d="M6.5 8l2.7 8 2-6.2M10.2 8l2.9 8L17.5 8M15 8h2.5" stroke="#e3e6ee" />
        </svg>
        <ToastText>
          Monday was a clean rebound night <Moon>🌙</Moon> Your{"\n"}score was lifted by a tighter routine and lowe...
        </ToastText>
        <svg width="11" height="6" viewBox="0 0 11 6">
          <path d="M.7 5.3 5.5.8l4.8 4.5" stroke="#d5d8da" strokeWidth="1.2" fill="none" />
        </svg>
      </Toast>
    </Panel>
  );
}

export default function App() {
  return (
    <Board>
      <GlobalStyle />
      <StagesPanel />
      <DurationPanel />
      <DetailsPanel />
      <TodayPanel />
    </Board>
  );
}
